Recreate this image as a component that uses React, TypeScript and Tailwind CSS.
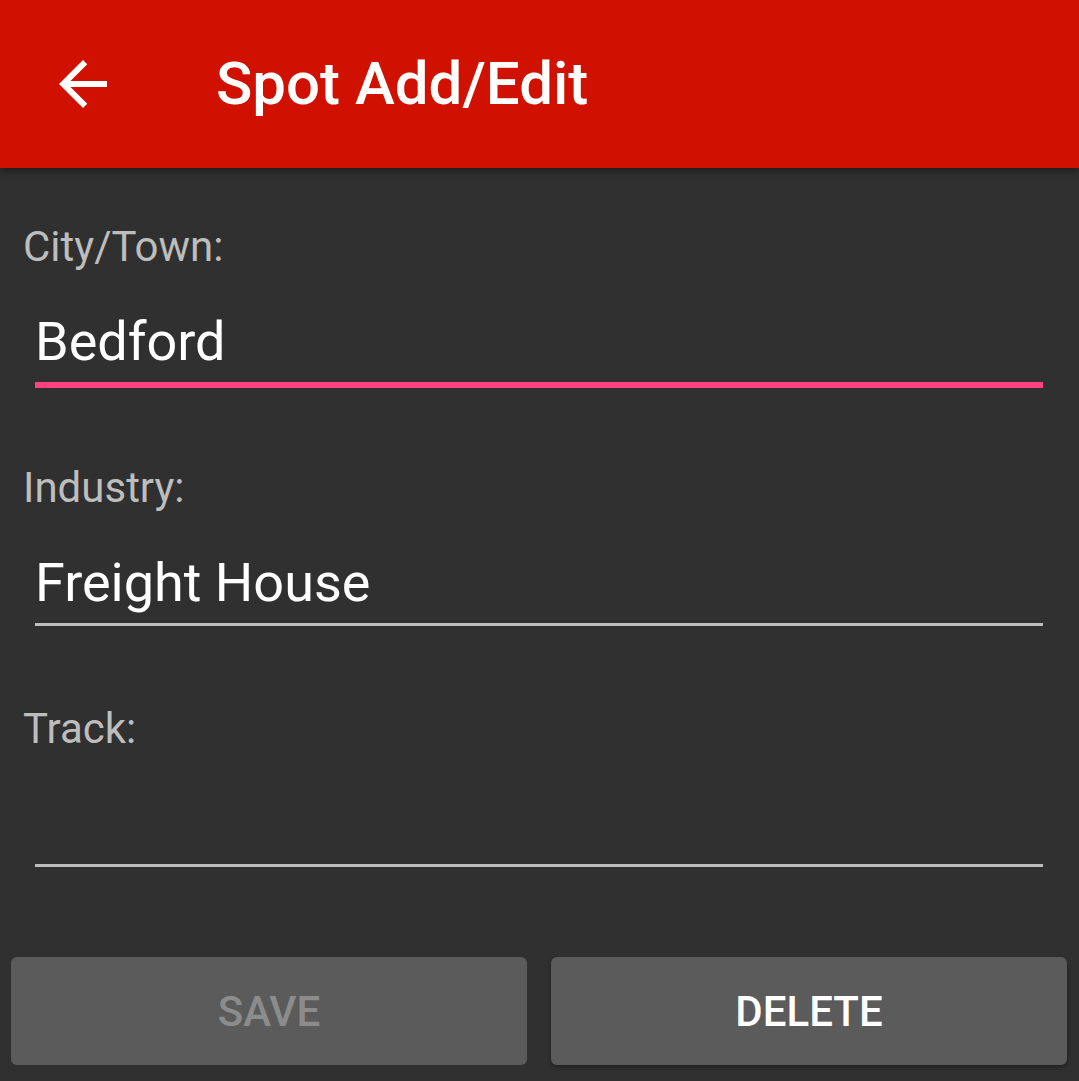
import React from 'react';

const font = { fontFamily: 'Roboto, "Noto Sans", sans-serif' };

function ArrowBack() {
  return (
    <svg width="72" height="72" viewBox="0 0 24 24" fill="white">
      <path d="M20 11H7.83l5.59-5.59L12 4l-8 8 8 8 1.41-1.41L7.83 13H20v-2z" />
    </svg>
  );
}

function Field({ label, value, focused }: { label: string; value: string; focused?: boolean }) {
  return (
    <div className="flex flex-col">
      <div className="h-[48px] pl-[23px] text-[42px] leading-[48px] text-[#bdbdbd]">{label}</div>
      <div className="mt-[39px] ml-[35px] mr-[36px]">
        <input
          defaultValue={value}
          readOnly
          className="w-full h-[64px] bg-transparent text-[54px] leading-[64px] text-white outline-none p-0"
        />
      </div>
      <div className="mt-[8px] h-[6px] ml-[35px] mr-[36px]">
        {focused ? (
          <div className="h-[6px] bg-[#ff4081]" />
        ) : (
          <div className="h-[3px] bg-[#bdbdbd]" />
        )}
      </div>
    </div>
  );
}

export default function App() {
  return (
    <div className="w-[1079px] h-[1081px] bg-[#303030] overflow-hidden flex flex-col" style={font}>
      <div className="relative z-10 h-[168px] bg-[#d01100] flex items-center pl-[47px] shadow-[0_3px_8px_rgba(0,0,0,0.45)]">
        <ArrowBack />
        <div className="ml-[97px] text-[60px] font-medium text-white leading-none">Spot Add/Edit</div>
      </div>

      <div className="flex flex-col gap-[76px] pt-[55px]">
        <Field label="City/Town:" value="Bedford" focused />
        <Field label="Industry:" value="Freight House" />
        <Field label="Track:" value="" />
      </div>

      <div className="mt-[87px] grid grid-cols-2 gap-[24px] pl-[11px] pr-[12px]">
        <button className="h-[108px] rounded-[6px] bg-[#5b5b5c] text-[42px] font-medium uppercase text-[#8c8c8c]">
          Save
        </button>
        <button className="h-[108px] rounded-[6px] bg-[#5b5b5c] text-[42px] font-medium uppercase text-white shadow-[0_2px_4px_rgba(0,0,0,0.35)]">
          Delete
        </button>
      </div>
    </div>
  );
}
